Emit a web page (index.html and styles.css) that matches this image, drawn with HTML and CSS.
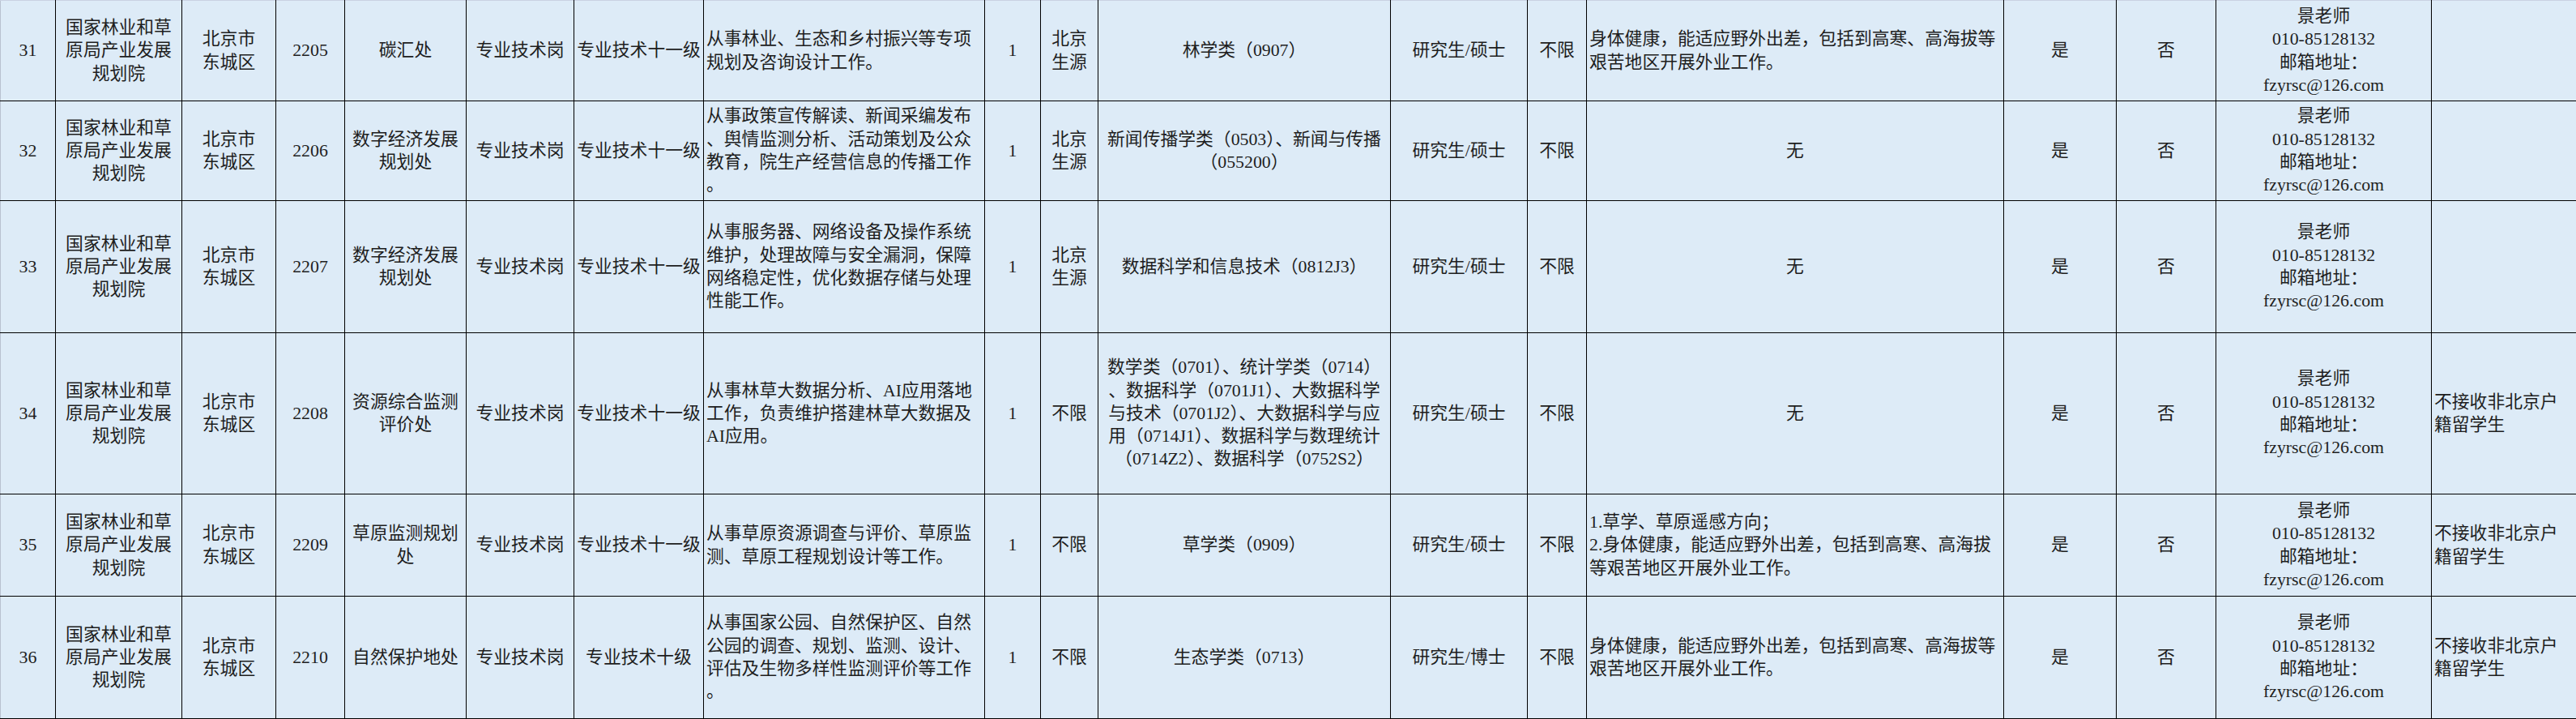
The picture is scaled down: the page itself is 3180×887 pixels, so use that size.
FILE: index.html
```html
<!DOCTYPE html>
<html lang="zh-CN">
<head>
<meta charset="utf-8">
<title>岗位表</title>
<link rel="stylesheet" href="styles.css">
</head>
<body>
<table class="grid">
  <colgroup>
    <col class="c-no"><col class="c-org"><col class="c-loc"><col class="c-code"><col class="c-dept"><col class="c-type"><col class="c-level"><col class="c-desc"><col class="c-num"><col class="c-src"><col class="c-major"><col class="c-deg"><col class="c-age"><col class="c-req"><col class="c-yes"><col class="c-no2"><col class="c-contact"><col class="c-note">
  </colgroup>
  <tbody>
    <tr class="h1">
      <td>31</td>
      <td>国家林业和草<br>原局产业发展<br>规划院</td>
      <td>北京市<br>东城区</td>
      <td>2205</td>
      <td>碳汇处</td>
      <td>专业技术岗</td>
      <td>专业技术十一级</td>
      <td class="l">从事林业、生态和乡村振兴等专项<br>规划及咨询设计工作。</td>
      <td>1</td>
      <td>北京<br>生源</td>
      <td>林学类（0907）</td>
      <td>研究生/硕士</td>
      <td>不限</td>
      <td class="l">身体健康，能适应野外出差，包括到高寒、高海拔等<br>艰苦地区开展外业工作。</td>
      <td>是</td>
      <td>否</td>
      <td>景老师<br>010-85128132<br>邮箱地址：<br>fzyrsc@126.com</td>
      <td class="l"></td>
    </tr>
    <tr class="h2">
      <td>32</td>
      <td>国家林业和草<br>原局产业发展<br>规划院</td>
      <td>北京市<br>东城区</td>
      <td>2206</td>
      <td>数字经济发展<br>规划处</td>
      <td>专业技术岗</td>
      <td>专业技术十一级</td>
      <td class="l">从事政策宣传解读、新闻采编发布<br>、舆情监测分析、活动策划及公众<br>教育，院生产经营信息的传播工作<br>。</td>
      <td>1</td>
      <td>北京<br>生源</td>
      <td>新闻传播学类（0503）、新闻与传播<br>（055200）</td>
      <td>研究生/硕士</td>
      <td>不限</td>
      <td>无</td>
      <td>是</td>
      <td>否</td>
      <td>景老师<br>010-85128132<br>邮箱地址：<br>fzyrsc@126.com</td>
      <td class="l"></td>
    </tr>
    <tr class="h3">
      <td>33</td>
      <td>国家林业和草<br>原局产业发展<br>规划院</td>
      <td>北京市<br>东城区</td>
      <td>2207</td>
      <td>数字经济发展<br>规划处</td>
      <td>专业技术岗</td>
      <td>专业技术十一级</td>
      <td class="l">从事服务器、网络设备及操作系统<br>维护，处理故障与安全漏洞，保障<br>网络稳定性，优化数据存储与处理<br>性能工作。</td>
      <td>1</td>
      <td>北京<br>生源</td>
      <td>数据科学和信息技术（0812J3）</td>
      <td>研究生/硕士</td>
      <td>不限</td>
      <td>无</td>
      <td>是</td>
      <td>否</td>
      <td>景老师<br>010-85128132<br>邮箱地址：<br>fzyrsc@126.com</td>
      <td class="l"></td>
    </tr>
    <tr class="h4">
      <td>34</td>
      <td>国家林业和草<br>原局产业发展<br>规划院</td>
      <td>北京市<br>东城区</td>
      <td>2208</td>
      <td>资源综合监测<br>评价处</td>
      <td>专业技术岗</td>
      <td>专业技术十一级</td>
      <td class="l">从事林草大数据分析、AI应用落地<br>工作，负责维护搭建林草大数据及<br>AI应用。</td>
      <td>1</td>
      <td>不限</td>
      <td>数学类（0701）、统计学类（0714）<br>、数据科学（0701J1）、大数据科学<br>与技术（0701J2）、大数据科学与应<br>用（0714J1）、数据科学与数理统计<br>（0714Z2）、数据科学（0752S2）</td>
      <td>研究生/硕士</td>
      <td>不限</td>
      <td>无</td>
      <td>是</td>
      <td>否</td>
      <td>景老师<br>010-85128132<br>邮箱地址：<br>fzyrsc@126.com</td>
      <td class="l">不接收非北京户<br>籍留学生</td>
    </tr>
    <tr class="h5">
      <td>35</td>
      <td>国家林业和草<br>原局产业发展<br>规划院</td>
      <td>北京市<br>东城区</td>
      <td>2209</td>
      <td>草原监测规划<br>处</td>
      <td>专业技术岗</td>
      <td>专业技术十一级</td>
      <td class="l">从事草原资源调查与评价、草原监<br>测、草原工程规划设计等工作。</td>
      <td>1</td>
      <td>不限</td>
      <td>草学类（0909）</td>
      <td>研究生/硕士</td>
      <td>不限</td>
      <td class="l">1.草学、草原遥感方向；<br>2.身体健康，能适应野外出差，包括到高寒、高海拔<br>等艰苦地区开展外业工作。</td>
      <td>是</td>
      <td>否</td>
      <td>景老师<br>010-85128132<br>邮箱地址：<br>fzyrsc@126.com</td>
      <td class="l">不接收非北京户<br>籍留学生</td>
    </tr>
    <tr class="h6">
      <td>36</td>
      <td>国家林业和草<br>原局产业发展<br>规划院</td>
      <td>北京市<br>东城区</td>
      <td>2210</td>
      <td>自然保护地处</td>
      <td>专业技术岗</td>
      <td>专业技术十级</td>
      <td class="l">从事国家公园、自然保护区、自然<br>公园的调查、规划、监测、设计、<br>评估及生物多样性监测评价等工作<br>。</td>
      <td>1</td>
      <td>不限</td>
      <td>生态学类（0713）</td>
      <td>研究生/博士</td>
      <td>不限</td>
      <td class="l">身体健康，能适应野外出差，包括到高寒、高海拔等<br>艰苦地区开展外业工作。</td>
      <td>是</td>
      <td>否</td>
      <td>景老师<br>010-85128132<br>邮箱地址：<br>fzyrsc@126.com</td>
      <td class="l">不接收非北京户<br>籍留学生</td>
    </tr>
  </tbody>
</table>
</body>
</html>
```

FILE: styles.css
```css
html, body {
  margin: 0;
  padding: 0;
  background: #ddebf7;
  overflow: hidden;
}

.grid {
  border-collapse: collapse;
  table-layout: fixed;
  width: 3191px;
  background: #ddebf7;
  font-family: "Liberation Serif", "Noto Sans CJK SC", serif;
  font-size: 21.8px;
  line-height: 28.3px;
  color: #1e1e1e;
}

.grid td {
  border: 1px solid #000;
  padding: 0 3px;
  text-align: center;
  vertical-align: middle;
  white-space: nowrap;
  overflow: hidden;
}

.grid td.l {
  text-align: left;
}

.grid tr:first-child td {
  border-top-color: #c9d2e2;
}

.grid td:first-child {
  border-left-color: #b9c2d0;
}

.c-no { width: 68px; }
.c-org { width: 156px; }
.c-loc { width: 116px; }
.c-code { width: 85px; }
.c-dept { width: 150px; }
.c-type { width: 133px; }
.c-level { width: 160px; }
.c-desc { width: 347px; }
.c-num { width: 69px; }
.c-src { width: 71px; }
.c-major { width: 361px; }
.c-deg { width: 169px; }
.c-age { width: 73px; }
.c-req { width: 515px; }
.c-yes { width: 139px; }
.c-no2 { width: 123px; }
.c-contact { width: 266px; }
.c-note { width: 190px; }

.h1 { height: 124px; }
.h2 { height: 123px; }
.h3 { height: 163px; }
.h4 { height: 199px; }
.h5 { height: 126px; }
.h6 { height: 151px; }
```
